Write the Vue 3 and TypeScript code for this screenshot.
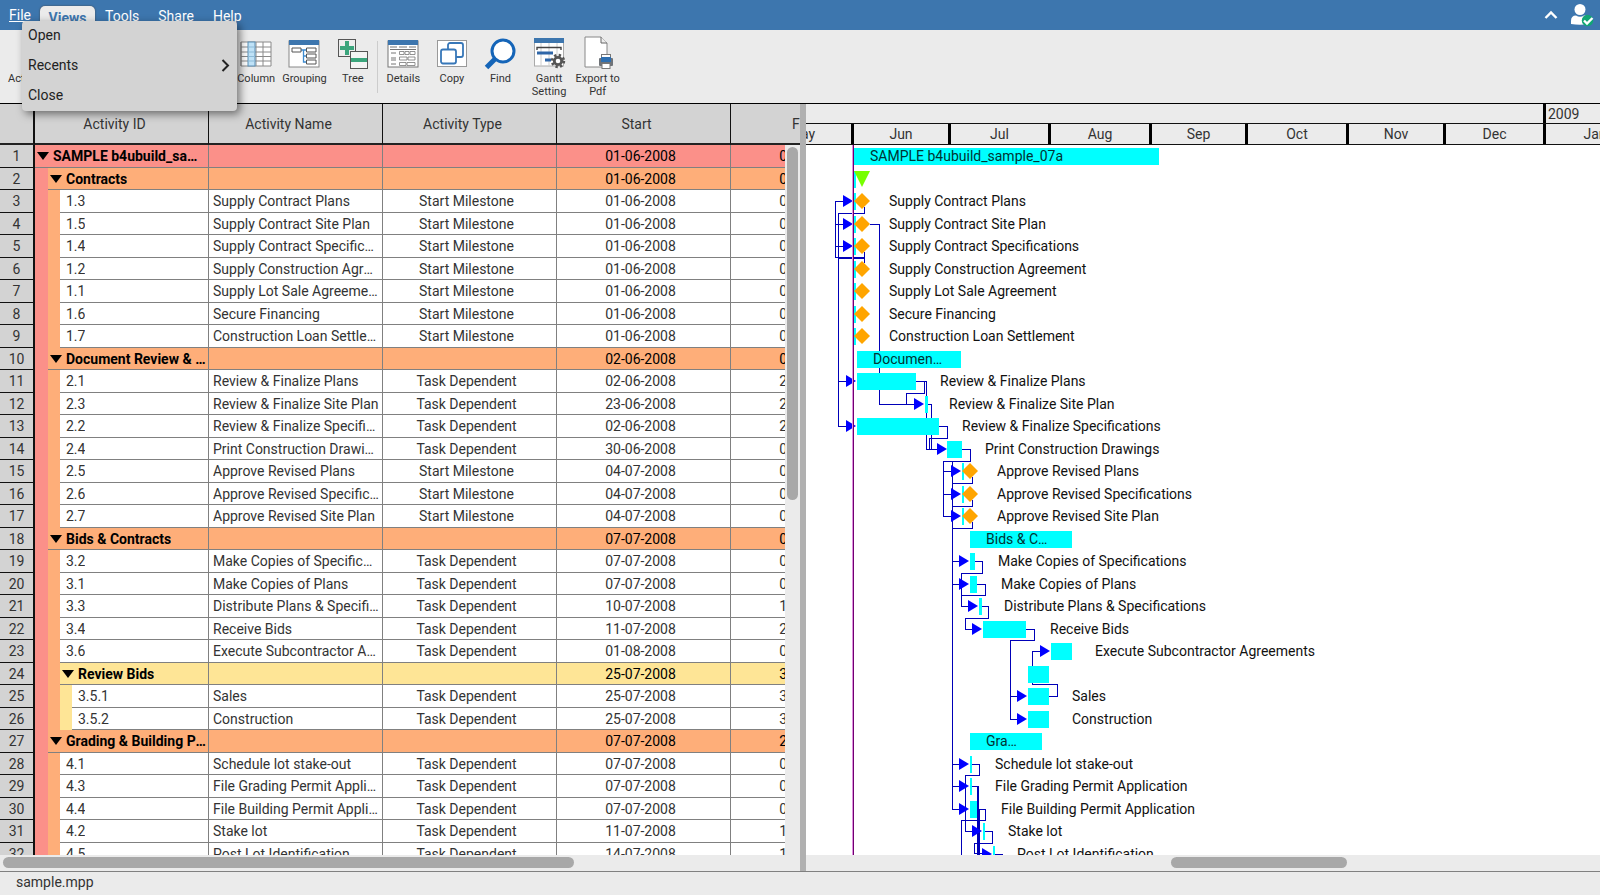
<script setup lang="ts">
import { ref } from 'vue'

type Kind = 'Start Milestone' | 'Task Dependent' | ''
interface Row {
  id: string
  name: string
  kind: Kind
  start: string
  finish: string
  level: number
  group: boolean
}

const group = (id: string, level: number, start: string, finish: string): Row =>
  ({ id, name: '', kind: '', start, finish, level, group: true })
const stone = (id: string, name: string, start: string): Row =>
  ({ id, name, kind: 'Start Milestone', start, finish: start, level: 2, group: false })
const task = (id: string, name: string, start: string, finish: string, level = 2): Row =>
  ({ id, name, kind: 'Task Dependent', start, finish, level, group: false })

const rows: Row[] = [
  group('SAMPLE b4ubuild_sample_07a', 0, '01-06-2008', '02-09-2008'),
  group('Contracts', 1, '01-06-2008', '01-06-2008'),
  stone('1.3', 'Supply Contract Plans', '01-06-2008'),
  stone('1.5', 'Supply Contract Site Plan', '01-06-2008'),
  stone('1.4', 'Supply Contract Specifications', '01-06-2008'),
  stone('1.2', 'Supply Construction Agreement', '01-06-2008'),
  stone('1.1', 'Supply Lot Sale Agreement', '01-06-2008'),
  stone('1.6', 'Secure Financing', '01-06-2008'),
  stone('1.7', 'Construction Loan Settlement', '01-06-2008'),
  group('Document Review & Revision', 1, '02-06-2008', '04-07-2008'),
  task('2.1', 'Review & Finalize Plans', '02-06-2008', '20-06-2008'),
  task('2.3', 'Review & Finalize Site Plan', '23-06-2008', '24-06-2008'),
  task('2.2', 'Review & Finalize Specifications', '02-06-2008', '27-06-2008'),
  task('2.4', 'Print Construction Drawings', '30-06-2008', '04-07-2008'),
  stone('2.5', 'Approve Revised Plans', '04-07-2008'),
  stone('2.6', 'Approve Revised Specifications', '04-07-2008'),
  stone('2.7', 'Approve Revised Site Plan', '04-07-2008'),
  group('Bids & Contracts', 1, '07-07-2008', '07-08-2008'),
  task('3.2', 'Make Copies of Specifications', '07-07-2008', '08-07-2008'),
  task('3.1', 'Make Copies of Plans', '07-07-2008', '09-07-2008'),
  task('3.3', 'Distribute Plans & Specifications', '10-07-2008', '10-07-2008'),
  task('3.4', 'Receive Bids', '11-07-2008', '24-07-2008'),
  task('3.6', 'Execute Subcontractor Agreements', '01-08-2008', '07-08-2008'),
  group('Review Bids', 2, '25-07-2008', '31-07-2008'),
  task('3.5.1', 'Sales', '25-07-2008', '31-07-2008', 3),
  task('3.5.2', 'Construction', '25-07-2008', '31-07-2008', 3),
  group('Grading & Building Permits', 1, '07-07-2008', '29-07-2008'),
  task('4.1', 'Schedule lot stake-out', '07-07-2008', '07-07-2008'),
  task('4.3', 'File Grading Permit Application', '07-07-2008', '07-07-2008'),
  task('4.4', 'File Building Permit Application', '07-07-2008', '09-07-2008'),
  task('4.2', 'Stake lot', '11-07-2008', '11-07-2008'),
  task('4.5', 'Post Lot Identification', '14-07-2008', '14-07-2008'),
]

const stripes = ['red', 'orange', 'yellow']
const columns = ['Activity ID', 'Activity Name', 'Activity Type', 'Start', 'Finish']

const months = [
  { name: 'May', width: 101 }, { name: 'Jun', width: 97 }, { name: 'Jul', width: 100 },
  { name: 'Aug', width: 101 }, { name: 'Sep', width: 96 }, { name: 'Oct', width: 101 },
  { name: 'Nov', width: 97 }, { name: 'Dec', width: 100 }, { name: 'Jan', width: 101 },
]

/* Chart coordinates: x counts from the chart's left edge, row n starts at 22.5 * (n - 1). */
const top = (row: number) => Math.round(22.5 * (row - 1))
const mid = (row: number) => top(row) + 11

interface Bar { row: number; x: number; w: number; label?: string }
const bars: Bar[] = [
  { row: 1, x: 48, w: 305, label: 'SAMPLE b4ubuild_sample_07a' },
  { row: 10, x: 51, w: 104, label: 'Documen…' },
  { row: 11, x: 51, w: 59 }, { row: 12, x: 119, w: 3 }, { row: 13, x: 51, w: 82 }, { row: 14, x: 141, w: 15 },
  { row: 15, x: 156, w: 2 }, { row: 16, x: 156, w: 2 }, { row: 17, x: 156, w: 2 },
  { row: 18, x: 164, w: 102, label: 'Bids & C…' },
  { row: 19, x: 164, w: 5 }, { row: 20, x: 164, w: 7 }, { row: 21, x: 173, w: 3 }, { row: 22, x: 177, w: 43 },
  { row: 23, x: 245, w: 21 }, { row: 24, x: 222, w: 21 }, { row: 25, x: 222, w: 21 }, { row: 26, x: 222, w: 21 },
  { row: 27, x: 164, w: 72, label: 'Gra…' },
  { row: 28, x: 164, w: 2 }, { row: 29, x: 164, w: 2 }, { row: 30, x: 164, w: 7 },
  { row: 31, x: 177, w: 2 }, { row: 32, x: 187, w: 2 },
]
const early = [2, 3, 4, 5, 6, 7, 8, 9]
const diamonds = [
  ...[3, 4, 5, 6, 7, 8, 9].map(row => ({ row, x: 56 })),
  ...[15, 16, 17].map(row => ({ row, x: 164 })),
]
const labelX: Record<number, number> = {
  3: 83, 4: 83, 5: 83, 6: 83, 7: 83, 8: 83, 9: 83, 11: 134, 12: 143, 13: 156, 14: 179, 15: 191, 16: 191,
  17: 191, 19: 192, 20: 195, 21: 198, 22: 244, 23: 289, 25: 266, 26: 266, 28: 189, 29: 189, 30: 195, 31: 202, 32: 211,
}
const labels = Object.entries(labelX).map(([row, x]) => ({ row: +row, x, text: rows[+row - 1].name }))

const arrows: [number, number][] = [
  [3, 47], [4, 47], [5, 47], [11, 50], [12, 118], [13, 50], [14, 141], [15, 155], [16, 155], [17, 155],
  [19, 163], [20, 163], [21, 172], [22, 176], [23, 244], [25, 221], [26, 221], [28, 163], [29, 163], [30, 163],
  [31, 176], [32, 186],
]

const m = mid
const links = [
  `M58 62V68H32V${m(13)}H42 M32 ${m(11)}H42`,
  `M37 ${m(3)}H29V112H58V107 M29 ${m(4)}H37 M29 ${m(5)}H37 M32 113H58V118`,
  `M64 ${m(4)}H73V${m(12)}H108`,
  `M110 ${m(11)}H120V${m(14)}H131 M118 ${m(11)}V248H100V${m(12)}`,
  `M122 ${m(12)}H125V${m(14)}`,
  `M133 ${m(13)}H141V293H123V${m(14)}`,
  `M156 ${m(14)}H164V316H137V${m(17)}H145 M137 ${m(15)}H145 M137 ${m(16)}H145`,
  `M146 316V${m(30)}H154 M146 ${m(19)}H154 M146 ${m(20)}H154 M146 ${m(28)}H154 M146 ${m(29)}H154`,
  ...[15, 16, 17].map(r => `M166 ${m(r) + 6}V${m(r) + 12}H146`),
  `M169 ${m(19)}H176V428H155V${m(21)}H163`,
  `M171 ${m(20)}H179V450H155`,
  `M176 ${m(21)}H182V473H159V${m(22)}H167`,
  `M220 ${m(22)}H228V495H204V${m(26)}H212 M204 ${m(25)}H212`,
  `M243 ${m(25)}H251V539H226V${m(23)}H235`,
  `M166 ${m(28)}H173V630H159V${m(31)}H167`,
  `M166 ${m(29)}H171V720 M172 ${m(29)}V720 M173 ${m(30)}V720`,
  `M171 ${m(30)}H179V675H155V720`,
  `M179 ${m(31)}H186V698H168V708H177`,
  `M189 ${m(32)}H196V720`,
]

const menuOpen = ref(true)
</script>

<template>
  <div class="app">
    <header class="menubar">
      <nav class="menus">
        <button class="menu file" @click="menuOpen = !menuOpen">File</button>
        <button class="menu views">Views</button>
        <button class="menu">Tools</button>
        <button class="menu">Share</button>
        <button class="menu">Help</button>
      </nav>
      <div class="account">
        <button class="plain" aria-label="Collapse ribbon">
          <svg width="14" height="10" viewBox="0 0 14 10"><path d="M1.5 8 7 2.5 12.5 8" fill="none" stroke="#fff" stroke-width="2.4" /></svg>
        </button>
        <button class="plain" aria-label="Account">
          <svg width="24" height="24" viewBox="0 0 24 24">
            <circle cx="10" cy="6.5" r="5.5" fill="#fff" />
            <path d="M1 21V18Q1 12.5 6 12.5Q10 15 14 12.5Q19 12.5 19 18V21Q10 22.5 1 21Z" fill="#fff" />
            <circle cx="17.5" cy="17.500" r="5.7" fill="#10a674" />
            <path d="M14 17.5 17 20.5 22.5 15" fill="none" stroke="#fff" stroke-width="2.4" />
          </svg>
        </button>
      </div>
    </header>

    <div v-if="menuOpen" class="dropdown">
      <button>Open</button>
      <button>Recents
        <svg width="10" height="14" viewBox="0 0 10 14"><path d="M1.5 2 7 7.5 1.5 13" fill="none" stroke="#222" stroke-width="2" /></svg>
      </button>
      <button>Close</button>
    </div>

    <div class="toolbar">
      <button class="tool lead"><span class="icon"></span>Activity</button>
      <div class="tools">
        <button class="tool">
          <svg class="icon" viewBox="0 0 32 32">
            <path d="M1 4H31V28H1Z" fill="#fff" />
            <path d="M1 4H31V28H1ZM1 9H31M1 14H31M1 18.5H31M1 23H31M16 4V28M23 4V28M1 4V28" fill="none" stroke="#8a8a8a" />
            <rect x="8" y="4" width="7" height="24" fill="#bfe2f7" stroke="#5b8fb5" />
            <path d="M8 9H15M8 14H15M8 18.5H15M8 23H15" stroke="#8dbbd8" />
          </svg>Column
        </button>
        <button class="tool">
          <svg class="icon" viewBox="0 0 32 32">
            <rect x="1" y="3" width="30" height="26" fill="#fff" stroke="#888" />
            <rect x="1" y="2" width="30" height="5" fill="#3d76ae" />
            <path d="M13 12H18M15.5 12V24H18M15.5 18H18" fill="none" stroke="#3d8bd0" stroke-width="1.3" />
            <path d="M4 10H13V14H4ZM18.5 10H28V14H18.5ZM18.5 16H28V20H18.5ZM18.5 22H28V26H18.5Z" fill="#fff" stroke="#555" />
          </svg>Grouping
        </button>
        <button class="tool">
          <svg class="icon" viewBox="0 0 32 32">
            <rect x="1.5" y="1.5" width="17" height="17" fill="#eee" stroke="#555" />
            <path d="M10 3V17M3 10H17" stroke="#3ba57c" stroke-width="4" />
            <rect x="13.5" y="13.5" width="17" height="17" fill="#f4f4f4" stroke="#555" />
            <path d="M14 22H30" stroke="#3ba57c" stroke-width="4" />
          </svg>Tree
        </button>
      </div>
      <span class="rule"></span>
      <div class="tools wide">
        <button class="tool">
          <svg class="icon" viewBox="0 0 32 32">
            <rect x="1" y="3" width="30" height="26" fill="#fff" stroke="#777" />
            <rect x="1" y="2" width="30" height="5" fill="#3d76ae" />
            <path d="M3 9H10M12 9H20M22 9H29M3 11.5H29M4 15H9M4 20H9M4 22H9M4 26H9" stroke="#777" />
            <path d="M12.5 13.5H17V16.5H12.5ZM18 13.5H22V16.5H18ZM23 13.5H28V16.5H23ZM12.5 19H20V22H12.5ZM21 19H28V22H21ZM12.5 24.5H19V27.5H12.5ZM20 24.5H28V27.5H20Z" fill="#fff" stroke="#777" stroke-width=".8" />
          </svg>Details
        </button>
        <button class="tool">
          <svg class="icon" viewBox="0 0 32 32">
            <rect x="1.5" y="2.5" width="29" height="26" fill="#fff" stroke="#999" />
            <rect x="12" y="5" width="15" height="14" rx="2" fill="#fff" stroke="#3777b8" stroke-width="1.8" />
            <rect x="5" y="11.5" width="15" height="14" rx="2" fill="#fff" stroke="#3777b8" stroke-width="1.8" />
          </svg>Copy
        </button>
        <button class="tool">
          <svg class="icon" viewBox="0 0 32 32">
            <path d="M12 20 2.5 29.5" stroke="#1565b8" stroke-width="5" />
            <circle cx="19" cy="13" r="11" fill="#fff" stroke="#1565b8" stroke-width="3" />
          </svg>Find
        </button>
        <button class="tool">
          <svg class="icon" viewBox="0 0 32 32">
            <rect x="1.5" y="1" width="29" height="27" fill="#fff" stroke="#aaa" />
            <path d="M8 1V28M16 1V28M24 1V28" stroke="#ccc" />
            <rect x="1" y="0" width="30" height="5" fill="#3d76ae" />
            <path d="M4 12V9.5H28V12" fill="none" stroke="#444" stroke-width="1.4" />
            <path d="M4 15H20M12 22H18" stroke="#2f66a8" stroke-width="3" />
            <circle cx="25" cy="23" r="5.8" fill="none" stroke="#555" stroke-width="2.8" stroke-dasharray="2.3 2.25" />
            <circle cx="25" cy="23" r="3.7" fill="#fff" stroke="#555" stroke-width="2.8" />
          </svg>Gantt Setting
        </button>
        <button class="tool">
          <svg class="icon" viewBox="0 0 32 32">
            <path d="M3 -1H19L25 5V29H3Z" fill="#fff" stroke="#888" />
            <path d="M19 -1V5H25" fill="#eee" stroke="#666" />
            <rect x="19.5" y="16.5" width="9" height="5" fill="#fff" stroke="#777" />
            <rect x="17" y="20" width="14" height="8" rx="1" fill="#6f7378" />
            <rect x="19" y="19" width="10" height="5" fill="#2f6fb0" />
            <rect x="20" y="25.5" width="8" height="5" fill="#fff" stroke="#777" />
          </svg>Export to Pdf
        </button>
      </div>
    </div>

    <main class="panes">
      <section class="grid-pane">
        <div class="grid-view">
          <table class="grid">
            <colgroup><col class="c-num" /><col v-for="c in columns" :key="c" class="c-data" /></colgroup>
            <thead>
              <tr><th class="num"></th><th v-for="c in columns" :key="c">{{ c }}</th></tr>
            </thead>
            <tbody>
              <tr v-for="(r, i) in rows" :key="r.id" :class="r.group && ['group', 'fill-' + stripes[r.level]]">
                <td class="num">{{ i + 1 }}</td>
                <td class="id">
                  <div class="id-cell">
                    <i v-for="s in stripes.slice(0, r.level)" :key="s" class="stripe" :class="'fill-' + s"></i>
                    <span class="id-text" :class="{ leaf: !r.group }">
                      <svg v-if="r.group" class="caret" width="12" height="8" viewBox="0 0 12 8"><path d="M0 0H12L6 8Z" /></svg>
                      <span class="clip">{{ r.id }}</span>
                    </span>
                  </div>
                </td>
                <td class="name"><div class="clip">{{ r.name }}</div></td>
                <td class="mid">{{ r.kind }}</td>
                <td class="mid">{{ r.start }}</td>
                <td class="mid">{{ r.finish }}</td>
              </tr>
            </tbody>
          </table>
          <div class="vscroll"><div class="vthumb"></div></div>
        </div>
        <div class="hscroll"><div class="hthumb left"></div></div>
      </section>

      <div class="divider"></div>

      <section class="chart-pane">
        <div class="timeline">
          <div class="years"><span class="year first"></span><span class="year">2009</span></div>
          <div class="months">
            <span v-for="mo in months" :key="mo.name" class="month" :style="{ width: mo.width + 'px' }">{{ mo.name }}</span>
          </div>
        </div>
        <div class="chart-view">
          <svg class="chart" width="100%" height="100%">
            <rect v-for="r in early" :key="r" x="48" :y="top(r) + 3" width="2" height="17" class="bar" />
            <path v-for="l in links" :key="l" :d="l" class="link" />
            <rect v-for="b in bars" :key="b.row" :x="b.x" :y="top(b.row) + 3" :width="b.w" height="17" class="bar" />
            <path v-for="[r, x] in arrows" :key="r" :d="`M${x} ${mid(r)}l-10 -6v12z`" class="arrow" />
            <path d="M48 26H64L56 42Z" class="flag" />
            <path v-for="d in diamonds" :key="d.row" :d="`M${d.x} ${mid(d.row) - 8}l8 8l-8 8l-8 -8z`" class="diamond" />
            <rect x="46" y="0" width="1" height="100%" class="now-light" />
            <rect x="47" y="0" width="1" height="100%" class="now" />
            <template v-for="b in bars" :key="b.row">
              <text v-if="b.label" :x="b.x + 16" :y="mid(b.row) + 5" class="bar-label">{{ b.label }}</text>
            </template>
            <text v-for="l in labels" :key="l.row" :x="l.x" :y="mid(l.row) + 5">{{ l.text }}</text>
          </svg>
        </div>
        <div class="hscroll"><div class="hthumb right"></div></div>
      </section>
    </main>

    <footer class="status">sample.mpp</footer>
  </div>
</template>

<style>
html, body { margin: 0; }
</style>

<style scoped>
.app { position: relative; display: flex; flex-direction: column; height: 100vh; overflow: hidden; background: #ebebeb; font: 14px/20px Roboto, sans-serif; color: #333; }
button { font: inherit; color: inherit; border: 0; background: none; padding: 0; }
.menubar { display: flex; justify-content: space-between; height: 30px; background: #3d76ae; color: #fff; overflow: hidden; flex: none; }
.menus { display: flex; align-items: flex-start; padding: 6px 0 0 9px; }
.menu { margin-right: 19px; }
.file { margin: -1px 9px 0 0; text-decoration: underline; }
.views { width: 55px; height: 24px; margin-right: 10px; border-radius: 5px 5px 0 0; background: #ebebeb; color: #3d76ae; font-weight: 700; box-shadow: 0 0 2px #444; }
.account { display: flex; align-items: center; gap: 12px; padding-right: 6px; }
.plain { display: flex; }
.dropdown { position: absolute; z-index: 3; left: 22px; top: 21px; width: 215px; border-radius: 4px; background: #d3d3d3; box-shadow: 3px 3px 8px rgba(0, 0, 0, .5); }
.dropdown button { display: flex; align-items: center; justify-content: space-between; width: 100%; height: 30px; padding: 0 6px 2px; color: #222; }
.toolbar { display: flex; align-items: flex-start; height: 65px; padding-top: 8px; border-bottom: 1px solid #000; flex: none; font-size: 11px; line-height: 13px; }
.tools { display: flex; width: 145px; }
.tools.wide { width: 243px; margin-left: 1px; }
.tool { display: flex; flex: 1; flex-direction: column; align-items: center; gap: 2px; min-width: 0; color: #333; }
.tool.lead { flex: none; width: 52px; margin-right: 180px; }
.icon { width: 32px; height: 32px; overflow: visible; }
.rule { width: 1px; height: 52px; margin-top: 3px; background: #ccc; }
.panes { display: flex; flex: 1; min-height: 0; }
.grid-pane { display: flex; flex-direction: column; flex: 0 0 50%; min-width: 0; }
.grid-view { position: relative; flex: 1; min-height: 0; overflow: hidden; }
.grid { table-layout: fixed; width: 905px; border-collapse: separate; border-spacing: 0; }
.c-num { width: 35px; }
.c-data { width: 174px; }
th { height: 39px; padding: 0 14px 0 0; border-right: 1px solid #111; border-bottom: 2px solid #222; background: #d3d3d3; font-weight: 400; }
th.num { padding: 0; border-right: 2px solid #111; }
td { box-sizing: border-box; height: 22px; padding: 0; border-right: 1px solid #808080; border-bottom: 1px solid #808080; background: #fff; text-align: center; line-height: 20px; overflow: hidden; white-space: nowrap; }
tbody tr:nth-child(odd) td { height: 23px; }
td.num { border-right: 2px solid #111; border-bottom-color: #111; background: #d3d3d3; }
td.id { border-bottom: 0; }
td.mid { padding-right: 6px; }
.id-cell { display: flex; height: 22px; text-align: left; }
tr:nth-child(odd) .id-cell { height: 23px; }
.stripe { flex: none; width: 12px; }
.stripe:first-child { width: 13px; }
.id-text { box-sizing: border-box; display: flex; align-items: center; gap: 4px; flex: 1; min-width: 0; padding-left: 2px; border-bottom: 1px solid #808080; }
.id-text.leaf { padding-left: 6px; }
.caret { flex: none; }
.clip { overflow: hidden; text-overflow: ellipsis; white-space: nowrap; }
.name { padding: 0 3px 0 4px; text-align: left; }
.group td:not(.num) { background: inherit; color: #000; }
.group .id-text { font-weight: 700; }
.fill-red { background: #fb9089; }
.fill-orange { background: #feae79; }
.fill-yellow { background: #fee596; }
.vscroll { position: absolute; top: 41px; right: 0; bottom: 0; width: 15px; background: #ebebeb; }
.vthumb { width: 11px; height: calc(50% - 2px); margin: 2px; border-radius: 6px; background: #a8a8a8; }
.hscroll { height: 16px; padding-top: 2px; box-sizing: border-box; background: #ebebeb; flex: none; }
.hthumb { height: 11px; border-radius: 6px; background: #a8a8a8; }
.hthumb.left { width: 571px; margin-left: 3px; }
.hthumb.right { width: 176px; margin-left: 46%; }
.divider { width: 6px; background: #b0b0b0; flex: none; }
.chart-pane { display: flex; flex-direction: column; flex: 1; min-width: 0; }
.timeline { height: 41px; overflow: hidden; border-bottom: 1px solid #111; box-sizing: border-box; flex: none; }
.years { display: flex; height: 20px; line-height: 20px; border-bottom: 1px solid #111; box-sizing: border-box; }
.year { padding-left: 2px; }
.year.first { box-sizing: border-box; width: 740px; border-right: 3px solid #000; }
.months { display: flex; width: 1000px; height: 20px; margin-left: -53px; line-height: 20px; }
.month { box-sizing: border-box; border-right: 3px solid #000; text-align: center; flex: none; }
.chart-view { flex: 1; min-height: 0; overflow: hidden; background: #fff; }
.chart { display: block; }
.bar { fill: #0ff; }
.link { fill: none; stroke: #0000b8; stroke-width: 1; shape-rendering: crispEdges; }
.arrow { fill: #00f; }
.flag { fill: #7f0; }
.diamond { fill: #ffa500; }
.now { fill: #700070; }
.now-light { fill: #e090e0; }
text { fill: #111; }
.bar-label { fill: #033; }
.status { height: 24px; padding-left: 16px; border-top: 1px solid #808080; box-sizing: border-box; flex: none; line-height: 21px; }
</style>
